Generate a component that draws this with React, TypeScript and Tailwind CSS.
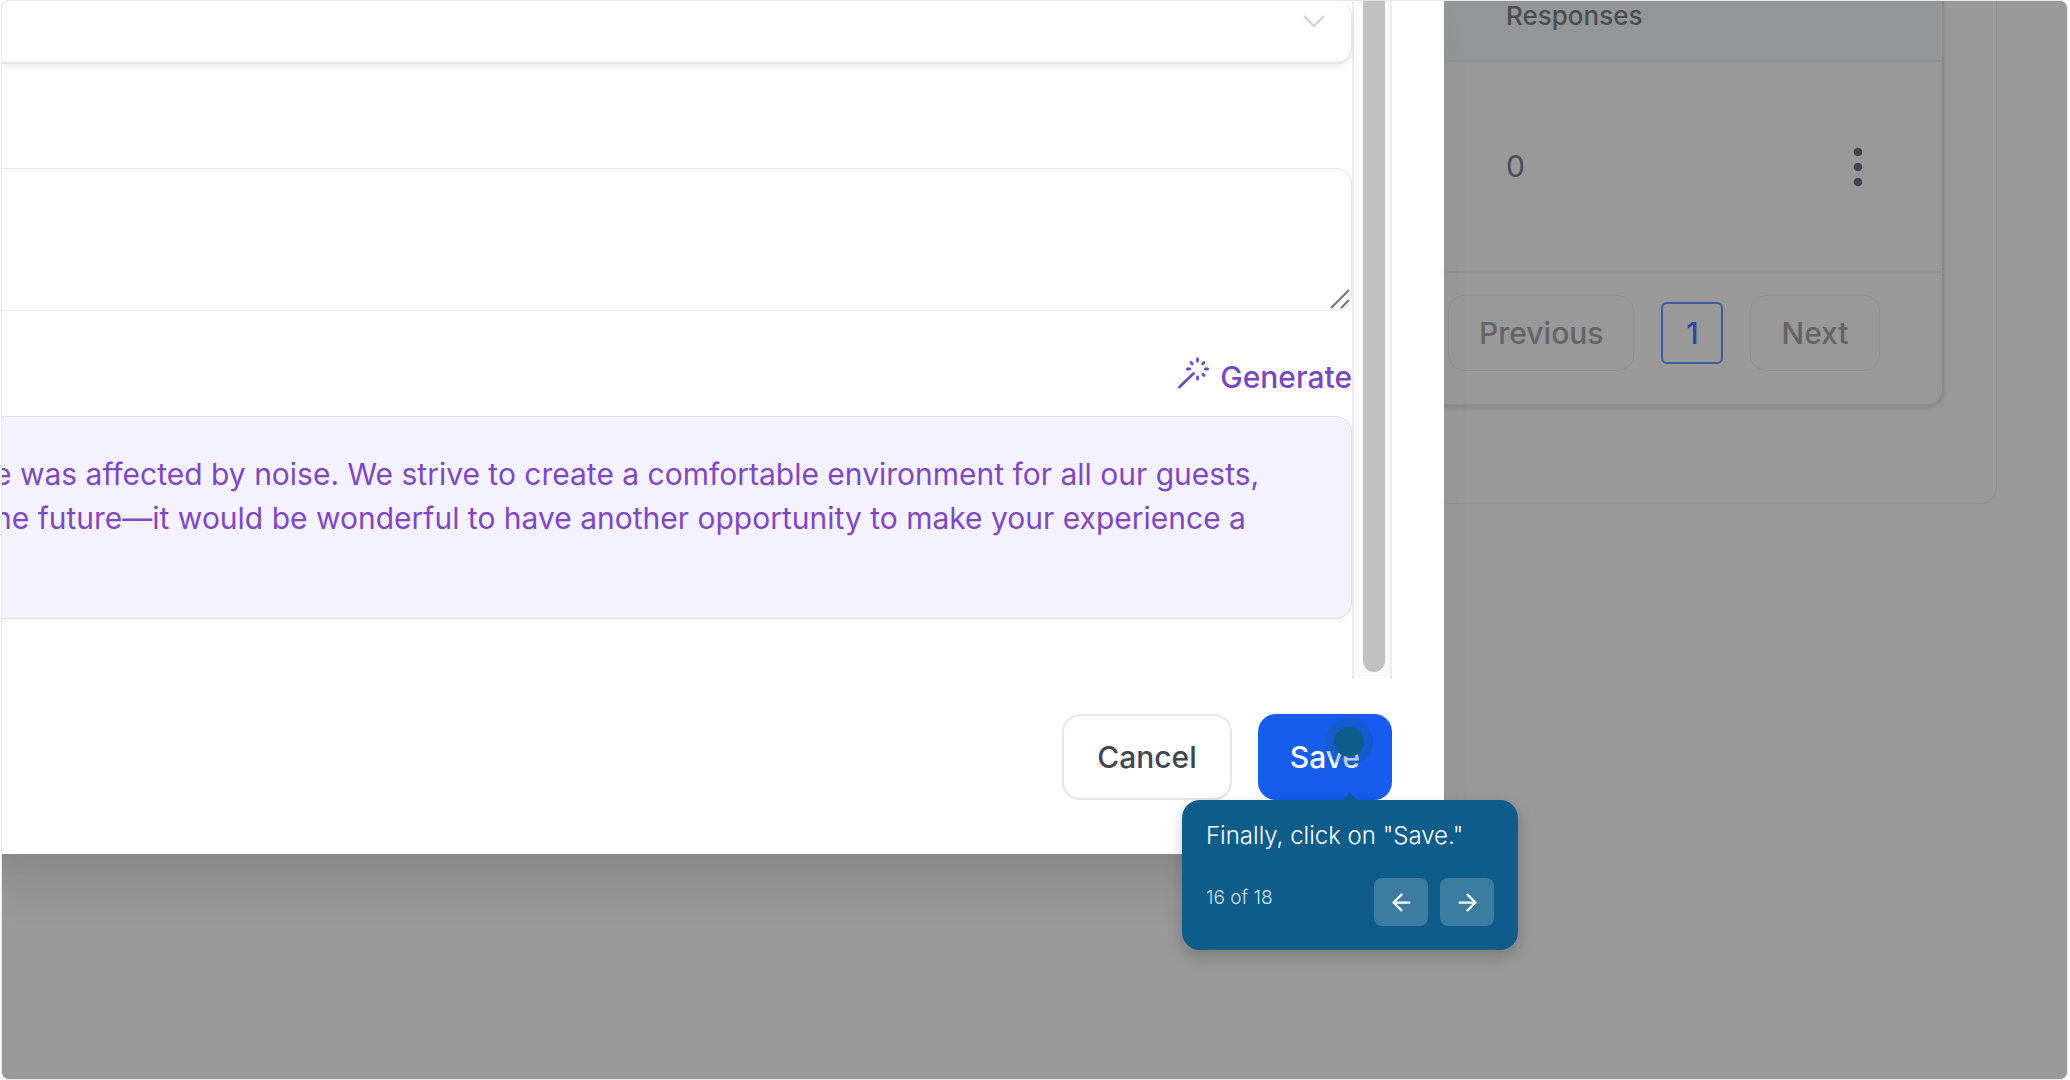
import { ArrowLeft, ArrowRight } from "lucide-react";

const TOUR = { step: 16, total: 18, text: 'Finally, click on "Save."' };

const FIELD = "block w-full bg-white border border-l-0 border-[#e5e5e5] rounded-r-2xl outline-none";

const PAGER_BUTTON =
  "h-19 px-[30px] rounded-2xl border border-[#8f8f8f] text-[30px] leading-9 font-medium text-[#636466]";

function WandIcon() {
  return (
    <svg width="32" height="32" viewBox="0 0 32 32" fill="none" stroke="#7848c0" strokeWidth="2.8" strokeLinecap="round">
      <path d="M1.5 30 15.5 16.5" />
      <path d="M19.5 1.8v2.4M19.5 19.8v2.4M9.3 12h2.4M27.3 12h2.4M13 5.6l1.3 1.3M24.8 17.2l1.3 1.3M26 5.6l-1.3 1.3" />
    </svg>
  );
}

function Grip() {
  return (
    <svg className="pointer-events-none absolute right-0.5 bottom-0.5" width="20" height="20" viewBox="0 0 20 20" stroke="#737373" strokeWidth="2">
      <path d="M1 19 19 1M11 19l8-8" />
    </svg>
  );
}

// Tour bubble, anchored to the hotspot on the button it explains
function TourBubble() {
  const arrowButton = "w-[54px] h-12 rounded-lg bg-white/20 text-white flex items-center justify-center";
  return (
    <div className="absolute right-[-126px] top-full w-84 rounded-[18px] bg-[#0d5c8a] px-6 pt-5 pb-6 text-white shadow-[0_6px_16px_rgba(0,0,0,0.2)]">
      <svg className="absolute left-[161px] bottom-full" width="14" height="7" viewBox="0 0 14 7" fill="#0d5c8a">
        <path d="M0 7 7 0l7 7z" />
      </svg>
      <p className="text-2xl leading-8 font-light">{TOUR.text}</p>
      <div className="mt-[26px] flex items-center justify-between">
        <span className="pb-2 text-[19px] leading-6 font-light text-white/80">
          {TOUR.step} of {TOUR.total}
        </span>
        <div className="flex gap-3">
          <button type="button" aria-label="Previous step" className={arrowButton}>
            <ArrowLeft size={27} strokeWidth={2} />
          </button>
          <button type="button" aria-label="Next step" className={arrowButton}>
            <ArrowRight size={27} strokeWidth={2} />
          </button>
        </div>
      </div>
    </div>
  );
}

function ReplyDialog() {
  return (
    <section role="dialog" className="relative z-10 flex-1 min-w-0 bg-white pr-13 pb-[54px] shadow-[-24px_24px_48px_rgba(0,0,0,0.12)]">
      <div className="flex">
        <div className="flex-1 min-w-0 pb-15">
          <div className="relative">
            <select aria-label="Tone" className={`${FIELD} h-[63px] appearance-none border-t-0 border-b-2 shadow-[0_3px_5px_rgba(0,0,0,0.07)]`} />
            <svg className="pointer-events-none absolute right-[27px] top-3.5" width="22" height="12" viewBox="0 0 22 12" fill="none" stroke="#cfcfcf" strokeWidth="2">
              <path d="M1 1l10 10L21 1" />
            </svg>
          </div>

          <div className="relative mt-[104px]">
            <textarea aria-label="Instructions" className={`${FIELD} h-[143px] resize-none`} />
            <Grip />
          </div>

          <div className="flex h-[105px] items-end justify-end pb-[19px]">
            <button type="button" className="flex items-center gap-2.5 text-[30px] leading-9 font-medium text-[#7848c0]">
              <span className="pb-2">
                <WandIcon />
              </span>
              Generate
            </button>
          </div>

          <div className="h-[203px] overflow-hidden rounded-r-2xl border border-l-0 border-[#e0dcee] bg-[#f4f2fe] pt-[35px]">
            <p className="-ml-2 whitespace-nowrap text-[30px] leading-11 text-[#8048c0]">
              e was affected by noise. We strive to create a comfortable environment for all our guests,
              <br />
              he future—it would be wonderful to have another opportunity to make your experience a
            </p>
          </div>
        </div>

        {/* Scrollbar */}
        <div className="flex w-10 border-x-2 border-[#ececec] bg-[#fafafa] pb-[7px] pl-[9px]">
          <div className="w-[22px] rounded-b-full bg-[#c1c1c1]" />
        </div>
      </div>

      <div className="flex justify-end gap-[26px] pt-[35px]">
        <button type="button" className="h-[86px] px-[33px] rounded-[18px] border-2 border-[#e7e7e7] bg-white text-[30px] font-medium text-[#414651]">
          Cancel
        </button>
        <div className="relative">
          <button type="button" className="h-[86px] px-8 rounded-[18px] bg-[#175cee] text-[30px] font-medium text-white">
            Save
          </button>
          <span className="absolute right-[19px] top-1 flex size-12 items-center justify-center rounded-full bg-[#0d5c8a]/30">
            <span className="size-[30px] rounded-full bg-[#0d5c8a]" />
          </span>
          <TourBubble />
        </div>
      </div>
    </section>
  );
}

function SurveyList() {
  return (
    <aside className="w-[623px] shrink-0 pr-[70px]">
      <div className="rounded-br-2xl border-r border-b border-[#8f8f8f] pr-[52px] pb-[97px]">
        <div className="rounded-br-2xl border-r-2 border-b-2 border-[#8b8b8b] bg-[#999999] shadow-[0_2px_4px_rgba(0,0,0,0.12)]">
          <table className="w-full text-left text-[#494c55]">
            <thead className="bg-[#949698]">
              <tr className="h-15 border-b-2 border-[#8e9091]">
                <th className="pl-[62px] pb-[30px] text-[26px] leading-7 font-medium">Responses</th>
                <th aria-label="Actions" />
              </tr>
            </thead>
            <tbody>
              <tr className="h-[211px] border-b-2 border-[#8f8f8f]">
                <td className="pl-[62px] text-[30px]">0</td>
                <td className="pr-[79px]">
                  <button type="button" aria-label="More actions" className="ml-auto block">
                    <svg width="10" height="40" viewBox="0 0 10 40" fill="#414450">
                      <circle cx="5" cy="5" r="4.3" />
                      <circle cx="5" cy="20" r="4.3" />
                      <circle cx="5" cy="35" r="4.3" />
                    </svg>
                  </button>
                </td>
              </tr>
            </tbody>
          </table>
          <nav className="flex items-center gap-[27px] pl-1 pt-[22px] pb-[33px]">
            <button type="button" className={PAGER_BUTTON}>Previous</button>
            <button type="button" className="size-[62px] rounded-md border-2 border-[#3f5c9c] text-[30px] leading-9 font-medium text-[#2b479b]">
              1
            </button>
            <button type="button" className={PAGER_BUTTON}>Next</button>
          </nav>
        </div>
      </div>
    </aside>
  );
}

export default function App() {
  return (
    <div className="h-screen overflow-hidden bg-white pl-px pr-0.5 font-['Inter',sans-serif]">
      <main className="flex h-full items-start overflow-hidden rounded-lg border border-[#e5e7eb] bg-[#999999]">
        <ReplyDialog />
        <SurveyList />
      </main>
    </div>
  );
}
